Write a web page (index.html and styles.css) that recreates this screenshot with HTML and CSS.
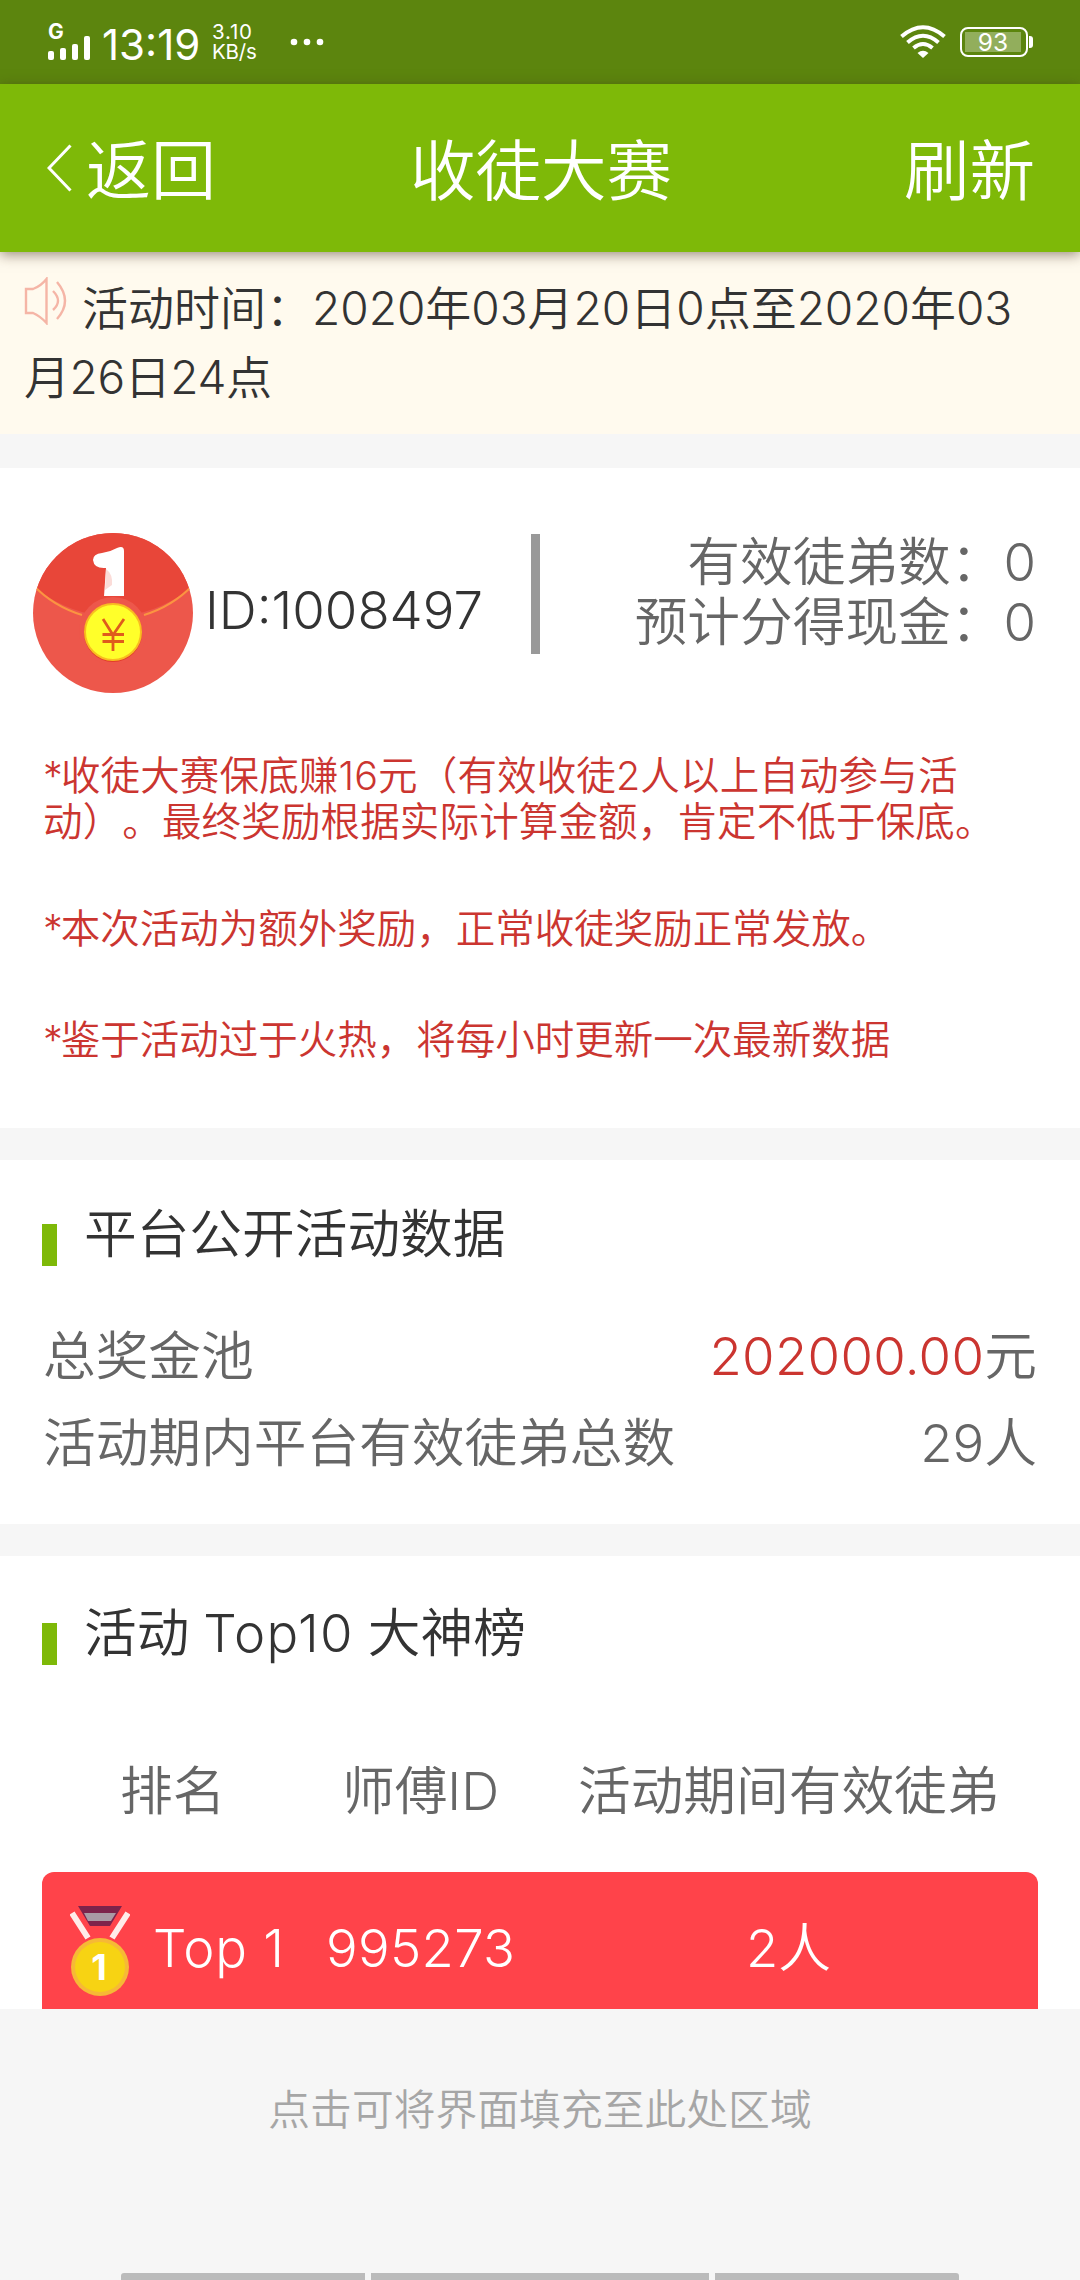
FILE: index.html
```html
<!DOCTYPE html>
<html lang="zh-CN">
<head>
<meta charset="utf-8">
<title>收徒大赛</title>
<link rel="stylesheet" href="styles.css">
</head>
<body>
<div class="status">
  <div class="signal">
    <span class="net">G</span>
    <svg width="44" height="24" viewBox="0 0 44 24" fill="#fff"><rect x="0" y="15" width="6" height="9" rx="2"/><rect x="12" y="12" width="6" height="12" rx="2"/><rect x="24" y="8" width="6" height="16" rx="2"/><rect x="36" y="0" width="6" height="24" rx="2"/></svg>
  </div>
  <span class="clock">13:19</span>
  <span class="speed"><span>3.10</span><span>KB/s</span></span>
  <svg class="dots" width="34" height="8" viewBox="0 0 34 8" fill="#fff"><circle cx="4" cy="4" r="3.3"/><circle cx="17" cy="4" r="3.3"/><circle cx="30" cy="4" r="3.3"/></svg>
  <svg class="wifi" width="46" height="34" viewBox="0 0 46 34" fill="none" stroke="#fff" stroke-width="4">
    <path d="M1.500 11.500Q23-7 44.500 11.500M7.500 17.500Q23 4 38.500 17.500M13.500 23Q23 15 32.500 23"/>
    <path d="M17.500 28Q23 23.500 28.500 28L23 33Z" fill="#fff" stroke="none"/>
  </svg>
  <div class="battery"><span class="level">93</span></div>
</div>
<header class="nav">
  <a class="back"><svg width="25" height="48" viewBox="0 0 25 48" fill="none" stroke="#fff" stroke-width="3"><path d="M23.500 1.500L2 24L23.500 46.500"/></svg><span>返回</span></a>
  <h1 class="nav-title">收徒大赛</h1>
  <a class="refresh">刷新</a>
</header>
<section class="notice">
  <p class="notice-line"><svg class="speaker" width="46" height="48" viewBox="0 0 46 48" fill="none" stroke="#f5b5a6" stroke-width="2.400"><path d="M2 12H9Q17 9 22.500 2V46Q16 39 9 36H2ZM29 14Q39 24 29 33M33 5Q49 24 33 42"/></svg><span>活动时间：</span>2020年03月20日0点至2020年03</p>
  <p class="notice-line second">月26日24点</p>
</section>
<section class="card profile">
  <div class="summary">
    <svg class="avatar" width="160" height="160" viewBox="0 0 160 160">
      <defs><clipPath id="round"><circle cx="80" cy="80" r="80"/></clipPath></defs>
      <g clip-path="url(#round)">
        <rect width="160" height="160" fill="#ed574b"/>
        <path d="M0 0H160V54Q80 113 0 54Z" fill="#e84639"/>
        <path d="M0 52Q20 73 49 82M111 82Q140 73 160 52" fill="none" stroke="#fb9441" stroke-width="2"/>
      </g>
      <circle cx="80" cy="98" r="34" fill="#ed574b"/>
      <path d="M84 15Q91 12 91 18V63H71L73 35Q61 36 60 27Q60 21 69 20Q77 19 84 15Z" fill="#fff"/>
      <path d="M73 36Q80 41 79 52L72 57Z" fill="#fbdcd8"/>
      <circle cx="80" cy="100" r="29" fill="#e23c29"/>
      <circle cx="80" cy="99" r="28" fill="#ffff2a" stroke="#f9bd20" stroke-width="2"/>
      <path d="M70 86L80 102L91 86M80 101V118M69.500 101.500H91M69.500 108.500H91" fill="none" stroke="#df5b1c" stroke-width="2.800"/>
    </svg>
    <span class="uid">ID:1008497</span>
    <span class="divider"></span>
    <div class="stats"><p>有效徒弟数：0</p><p>预计分得现金：0</p></div>
  </div>
  <div class="rules">
    <p><span class="star">*</span>收徒大赛保底赚16元（有效收徒2人以上自动参与活<br>动）。最终奖励根据实际计算金额，肯定不低于保底。</p>
    <p><span class="star">*</span>本次活动为额外奖励，正常收徒奖励正常发放。</p>
    <p><span class="star">*</span>鉴于活动过于火热，将每小时更新一次最新数据</p>
  </div>
</section>
<section class="card platform">
  <h2 class="title"><span>平台公开活动数据</span></h2>
  <div class="row"><span>总奖金池</span><span><span class="money">202000.00</span>元</span></div>
  <div class="row"><span>活动期内平台有效徒弟总数</span><span>29人</span></div>
</section>
<section class="card ranking">
  <h2 class="title"><span>活动 <span class="top">Top10</span> 大神榜</span></h2>
  <div class="thead"><span>排名</span><span>师傅ID</span><span>活动期间有效徒弟</span></div>
  <div class="first">
    <svg class="medal" width="60" height="92" viewBox="0 0 60 92">
      <path d="M8 0H52L40 20H20Z" fill="#7d234b"/><path d="M14 7H46L41 15H18Z" fill="#a99aa5"/>
      <path d="M2 7L18 32M58 7L42 32" stroke="#ffece9" stroke-width="6"/>
      <circle cx="30" cy="61" r="29" fill="#f6b936"/><circle cx="30" cy="61" r="25" fill="#f7d313"/>
      <text x="29" y="74" class="medal-no">1</text>
    </svg>
    <span class="place">Top 1</span><span class="master">995273</span><span class="count">2人</span>
  </div>
</section>
<footer class="filler">
  <p>点击可将界面填充至此处区域</p>
  <div class="handles"><i></i><i class="wide"></i><i></i></div>
</footer>
</body>
</html>
```
FILE: styles.css
```css
* { box-sizing: border-box; margin: 0; padding: 0; }
body {
  width: 1080px;
  height: 2280px;
  overflow: hidden;
  display: flex;
  flex-direction: column;
  background: #f6f6f6;
  color: #666;
  font-family: Inter, "Noto Sans CJK SC", sans-serif;
  font-weight: 350;
  font-size: 52.7px;
  white-space: nowrap;
  text-spacing-trim: space-all;
}
.status { height: 84px; flex: none; display: flex; align-items: center; background: #5c850e; color: #fff; padding: 0 48px; }
.signal { width: 44px; height: 38px; margin-top: -2px; display: flex; flex-direction: column; justify-content: space-between; }
.net { font-size: 21px; line-height: 20px; font-weight: 700; }
.signal svg { margin-top: -8px; flex: none; }
.clock { font-size: 42px; font-weight: 400; margin: 5px 0 0 10px; width: 101px; letter-spacing: 0; }
.speed { display: flex; flex-direction: column; font-size: 20.5px; line-height: 20px; font-weight: 400; margin-left: 9px; width: 50px; }
.speed span { height: 20px; letter-spacing: -.2px; }
.speed span:first-child { letter-spacing: .8px; }
.dots { margin-left: 28px; }
.wifi { margin-left: auto; }
.battery { position: relative; width: 68px; height: 30px; border: 2px solid #fff; border-radius: 8px; padding: 3px; margin: 0 4px 0 14px; }
.battery::after { content: ""; position: absolute; left: 67px; top: 7px; width: 4px; height: 12px; background: #fff; border-radius: 0 3px 3px 0; }
.level { display: block; width: 56px; height: 20px; background: #92ae5c; color: #fff; font-size: 24.5px; font-weight: 400; line-height: 21px; text-align: center; }
.nav { position: relative; height: 168px; flex: none; display: flex; align-items: center; justify-content: space-between; padding: 0 45px 0 47px; background: #7eb908; color: #fff; font-size: 65px; box-shadow: 0 3px 12px rgba(60, 40, 20, .5); }
.back { display: flex; align-items: center; gap: 14px; width: 260px; }
.back span, .nav-title, .refresh { margin-top: -4px; }
.nav-title { font-size: 65.5px; font-weight: 350; }
.refresh { width: 260px; text-align: right; font-size: 65.5px; }
.notice { height: 182px; flex: none; background: #fffaee; padding: 22px 24px 0; font-size: 46px; line-height: 69px; color: #333; }
.notice-line { height: 69px; }
.second { letter-spacing: -.4px; }
.speaker { margin-right: 12px; vertical-align: 0; }
.card { background: #fff; flex: none; }
.profile { height: 660px; margin-top: 34px; padding: 65px 44px 0 33px; }
.summary { display: flex; height: 160px; }
.uid { margin: 45px 0 0 12px; line-height: 64px; color: #333; width: 326px; }
.divider { width: 9px; height: 120px; margin-top: 1px; background: #999; }
.stats { margin: -1px 0 0 auto; text-align: right; line-height: 60px; }
.rules { color: #cb3530; font-size: 39.5px; line-height: 46px; padding: 60px 0 0 10px; }
.rules p + p { margin-top: 61px; }
.rules p:last-child { margin-top: 65px; }
.rules p:first-child { letter-spacing: .15px; }
.star { margin-right: -2px; }
.platform { height: 364px; margin-top: 32px; padding: 36px 43px 0; }
.title { display: flex; align-items: center; height: 72px; font-size: 52.7px; font-weight: 350; color: #333; }
.title > span { margin-top: -5px; }
.title::before { content: ""; width: 15px; height: 42px; margin: 26px 27px 0 -1px; background: #7eb908; }
.top { letter-spacing: 1.4px; margin: 0 -1px; }
.row { display: flex; justify-content: space-between; height: 87px; line-height: 87px; }
.platform .title + .row { margin-top: 45px; }
.money { color: #cb3530; letter-spacing: .3px; }
.ranking { height: 453px; margin-top: 32px; padding: 39px 42px 0; overflow: hidden; }
.ranking .title { padding-left: 1px; }
.thead { display: grid; grid-template-columns: 222px 236px 1fr; height: 80px; line-height: 80px; margin: 84px 0 0 78px; }
.first { display: flex; align-items: center; height: 137px; margin-top: 41px; background: #ff434a; border-radius: 12px 12px 0 0; color: #fff; padding: 15px 0 0 28px; }
.medal { margin-top: 7px; }
.medal-no { font: 700 36px Inter, sans-serif; fill: #fff; text-anchor: middle; }
.place { margin-left: 23px; width: 173px; letter-spacing: .8px; }
.master { width: 420px; letter-spacing: .3px; }
.count { margin-top: -8px; }
.filler { flex: 1; display: flex; flex-direction: column; align-items: center; justify-content: space-between; padding-top: 71px; color: #a6a6a6; font-size: 41.8px; line-height: 60px; }
.handles { display: flex; gap: 6px; height: 7px; }
.handles i { width: 244px; background: #bbb; border-radius: 3px 0 0 0; }
.handles .wide { width: 338px; border-radius: 0; }
.handles i:last-child { border-radius: 0 3px 0 0; }
```
